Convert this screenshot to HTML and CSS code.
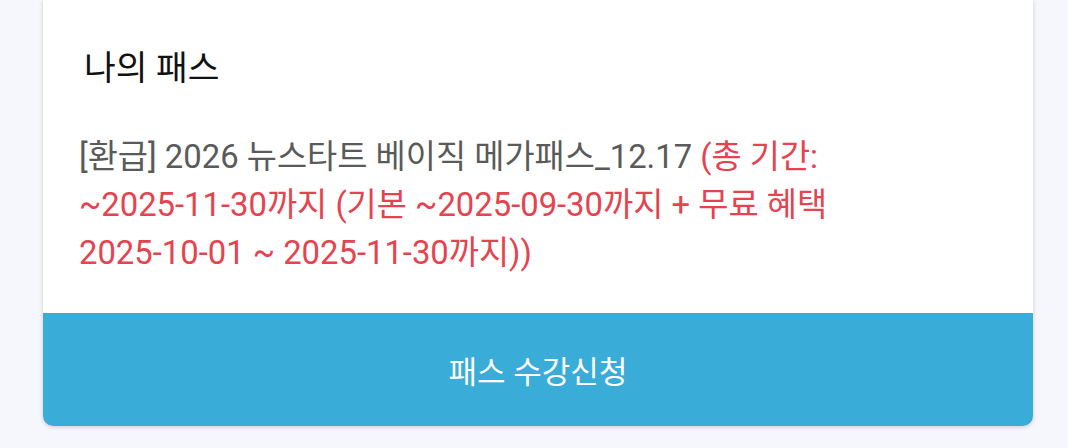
FILE: index.html
```html
<!DOCTYPE html>
<html lang="ko">
<head>
<meta charset="utf-8">
<link rel="stylesheet" href="styles.css">
</head>
<body>
<div class="page">
  <div class="card">
    <div class="card-body">
      <h2 class="title">나의 패스</h2>
      <p class="pass">[환급] 2026 뉴스타트 베이직 메가패스_12.17 <span class="period">(총 기간: <span class="nw">~2025-11-30까지</span> (기본 <span class="nw">~2025-09-30까지</span> + 무료 혜택 <span class="nw">2025-10-01</span> ~ <span class="nw">2025-11-30까지))</span></span></p>
    </div>
    <button class="apply">패스 수강신청</button>
  </div>
</div>
</body>
</html>
```
FILE: styles.css
```css
html, body {
  margin: 0;
  padding: 0;
  background: #f6f7fc;
  font-family: Roboto, "Noto Sans CJK KR", sans-serif;
}
.page {
  padding: 0 35px 0 43px;
  height: 448px;
  overflow: hidden;
}
.card {
  background: #fff;
  border-radius: 0 0 10px 10px;
  box-shadow: 0 1px 4px rgba(0, 0, 0, 0.18);
  display: flex;
  flex-direction: column;
}
.card-body {
  padding: 44px 60px 36px 36px;
}
.title {
  margin: 0;
  padding-left: 5px;
  font-size: 34.5px;
  font-weight: 400;
  line-height: 48px;
  color: #111;
}
.pass {
  margin: 41px 0 0;
  font-size: 32.8px;
  line-height: 48px;
  color: #5a5a5a;
  word-break: keep-all;
}
.period {
  color: #e5434f;
}
.nw {
  white-space: nowrap;
}
.apply {
  display: block;
  width: 100%;
  height: 113px;
  border: 0;
  border-radius: 0 0 10px 10px;
  background: #3aacd8;
  color: #fff;
  font-family: Roboto, "Noto Sans CJK KR", sans-serif;
  font-size: 31px;
  padding: 0;
}
```
